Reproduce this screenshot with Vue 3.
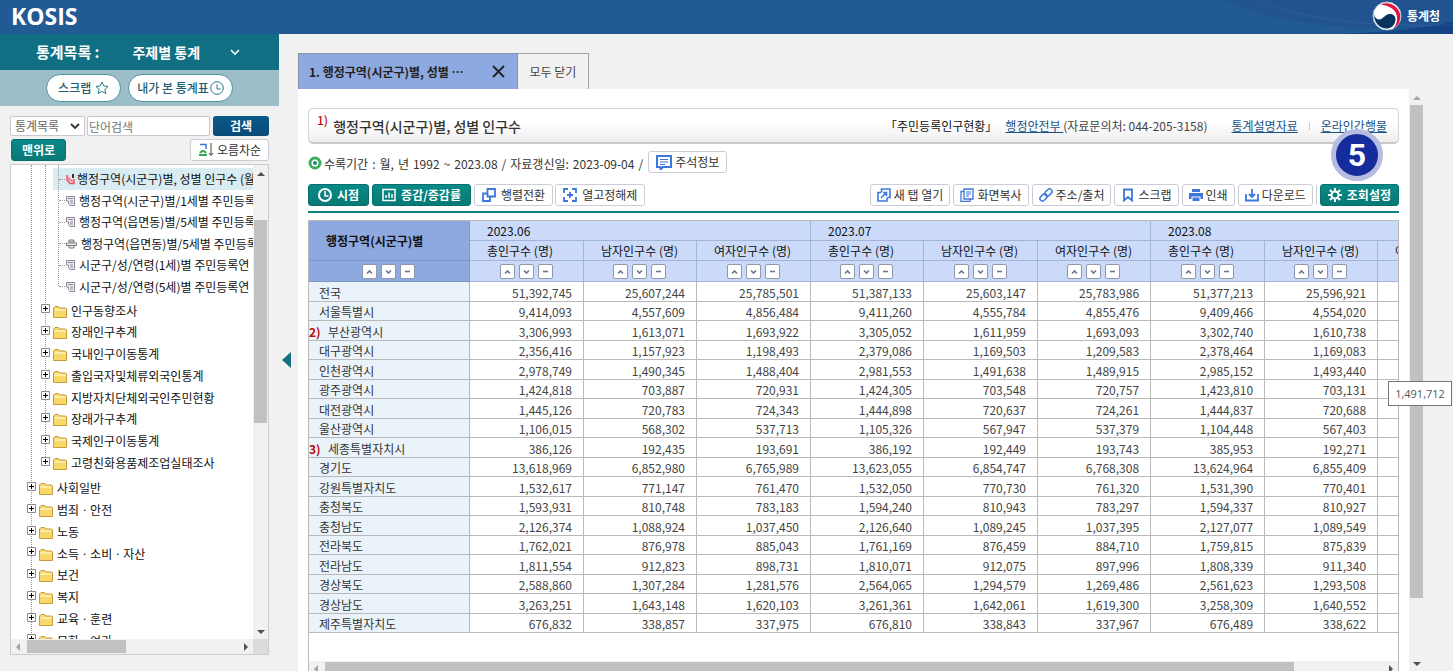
<script setup>
const leaves = [
  { text: '행정구역(시군구)별, 성별 인구수 (월', icon: 'on' },
  { text: '행정구역(시군구)별/1세별 주민등록', icon: 'doc' },
  { text: '행정구역(읍면동)별/5세별 주민등록', icon: 'doc' },
  { text: '행정구역(읍면동)별/5세별 주민등록', icon: 'print' },
  { text: '시군구/성/연령(1세)별 주민등록연', icon: 'doc' },
  { text: '시군구/성/연령(5세)별 주민등록연', icon: 'doc' },
]
const inner = ['인구동향조사', '장래인구추계', '국내인구이동통계', '출입국자및체류외국인통계', '지방자치단체외국인주민현황', '장래가구추계', '국제인구이동통계', '고령친화용품제조업실태조사']
const outer = ['사회일반', '범죄ㆍ안전', '노동', '소득ㆍ소비ㆍ자산', '보건', '복지', '교육ㆍ훈련', '문화ㆍ여가']

const period = ['수록기간', ':', '월,', '년', '1992', '~', '2023.08', '/', '자료갱신일:', '2023-09-04', '/']
const months = ['2023.06', '2023.07', '2023.08']
const measures = ['총인구수 (명)', '남자인구수 (명)', '여자인구수 (명)']
const rows = [
  ['전국', '51,392,745', '25,607,244', '25,785,501', '51,387,133', '25,603,147', '25,783,986', '51,377,213', '25,596,921'],
  ['서울특별시', '9,414,093', '4,557,609', '4,856,484', '9,411,260', '4,555,784', '4,855,476', '9,409,466', '4,554,020'],
  ['부산광역시', '3,306,993', '1,613,071', '1,693,922', '3,305,052', '1,611,959', '1,693,093', '3,302,740', '1,610,738'],
  ['대구광역시', '2,356,416', '1,157,923', '1,198,493', '2,379,086', '1,169,503', '1,209,583', '2,378,464', '1,169,083'],
  ['인천광역시', '2,978,749', '1,490,345', '1,488,404', '2,981,553', '1,491,638', '1,489,915', '2,985,152', '1,493,440'],
  ['광주광역시', '1,424,818', '703,887', '720,931', '1,424,305', '703,548', '720,757', '1,423,810', '703,131'],
  ['대전광역시', '1,445,126', '720,783', '724,343', '1,444,898', '720,637', '724,261', '1,444,837', '720,688'],
  ['울산광역시', '1,106,015', '568,302', '537,713', '1,105,326', '567,947', '537,379', '1,104,448', '567,403'],
  ['세종특별자치시', '386,126', '192,435', '193,691', '386,192', '192,449', '193,743', '385,953', '192,271'],
  ['경기도', '13,618,969', '6,852,980', '6,765,989', '13,623,055', '6,854,747', '6,768,308', '13,624,964', '6,855,409'],
  ['강원특별자치도', '1,532,617', '771,147', '761,470', '1,532,050', '770,730', '761,320', '1,531,390', '770,401'],
  ['충청북도', '1,593,931', '810,748', '783,183', '1,594,240', '810,943', '783,297', '1,594,337', '810,927'],
  ['충청남도', '2,126,374', '1,088,924', '1,037,450', '2,126,640', '1,089,245', '1,037,395', '2,127,077', '1,089,549'],
  ['전라북도', '1,762,021', '876,978', '885,043', '1,761,169', '876,459', '884,710', '1,759,815', '875,839'],
  ['전라남도', '1,811,554', '912,823', '898,731', '1,810,071', '912,075', '897,996', '1,808,339', '911,340'],
  ['경상북도', '2,588,860', '1,307,284', '1,281,576', '2,564,065', '1,294,579', '1,269,486', '2,561,623', '1,293,508'],
  ['경상남도', '3,263,251', '1,643,148', '1,620,103', '3,261,361', '1,642,061', '1,619,300', '3,258,309', '1,640,552'],
  ['제주특별자치도', '676,832', '338,857', '337,975', '676,810', '338,843', '337,967', '676,489', '338,622'],
]
const notes = { '부산광역시': '2)', '세종특별자치시': '3)' }
const sorts = [
  { name: '오름차순 정렬', d: 'M4 8.5 L6.500 6 L9 8.5' },
  { name: '내림차순 정렬', d: 'M4 5.5 L6.500 8 L9 5.5' },
  { name: '정렬 해제', d: 'M4 6.5 H9' },
]
</script>

<template>
  <div class="page">
    <header class="top">
      <svg class="swoosh" viewBox="0 0 260 34" aria-hidden="true">
        <path d="M30 0 C90 26 170 32 260 27 V0 Z" fill="#1f4f8c" opacity=".55" />
        <path d="M120 34 C190 34 230 28 260 22 V34 Z" fill="#123f80" opacity=".8" />
        <path d="M60 0 C110 20 180 27 260 25" fill="none" stroke="#3467a5" opacity=".5" />
      </svg>
      <a class="brand" href="#">KOSIS</a>
      <a class="agency" href="#">
        <svg width="30" height="30" viewBox="0 0 30 30" aria-hidden="true">
          <circle cx="15" cy="15" r="14" fill="#fff" stroke="#b4c2d6" />
          <path d="M9 3.500 C17 0 26 5 28 13 C29 20 26 25 22 27 C26 21 26 15 23 10.500 C20 6.500 15 4.500 9 3.500Z" fill="#e4123f" />
          <path d="M2 12 C2 17 6 20 10 17.500 C13 15.500 14 13 18 13 C21 13 23.500 15 23.500 18 C23.500 24 19 28 14 27.500 C7 27 1.500 21 2 12Z" fill="#06345f" />
        </svg>
        <span>통계청</span>
      </a>
    </header>

    <div class="body">
      <aside class="side">
        <div class="catalog">
          <label for="catalog">통계목록 :</label>
          <select id="catalog" class="catalog-select"><option>주제별 통계</option></select>
          <svg class="chev" width="10" height="7" viewBox="0 0 10 7" aria-hidden="true"><path d="M1 1 L5 5 L9 1" fill="none" stroke="#fff" stroke-width="1.600" /></svg>
        </div>
        <div class="pills">
          <button class="pill">스크랩
            <svg width="14" height="14" viewBox="0 0 14 14"><path d="M7 1 L8.800 5 L13 5.400 L9.900 8.300 L10.800 12.600 L7 10.400 L3.200 12.600 L4.100 8.300 L1 5.400 L5.200 5Z" fill="none" stroke="#27798b" stroke-linejoin="round" /></svg>
          </button>
          <button class="pill viewed">내가 본 통계표
            <svg width="14" height="14" viewBox="0 0 14 14"><circle cx="7" cy="7" r="6.300" fill="none" stroke="#27798b" /><path d="M7 3.500 V8 H10.500" fill="none" stroke="#27798b" /></svg>
          </button>
        </div>

        <div class="search">
          <div class="selwrap">
            <select class="box" aria-label="검색 구분"><option>통계목록</option></select>
            <svg class="sel-chev" width="10" height="7" viewBox="0 0 10 7" aria-hidden="true"><path d="M1 1 L5 5 L9 1" fill="none" stroke="#333" stroke-width="1.800" /></svg>
          </div>
          <input class="box word" type="text" placeholder="단어검색" aria-label="단어검색">
          <button class="find">검색</button>
        </div>
        <div class="search second">
          <button class="teal totop">맨위로</button>
          <button class="plain order">
            <svg width="16" height="14" viewBox="0 0 16 14"><path d="M2 1.500 H8 V6" fill="none" stroke="#3b78d8" stroke-width="1.500" /><path d="M2 10 Q5 6 8 10 M1 12 H9" fill="none" stroke="#35a853" stroke-width="2" /><path d="M13 0 V12 M11 10 L13 12.500 L15 10" fill="none" stroke="#444" /></svg>
            오름차순
          </button>
        </div>

        <div class="treebox">
          <div class="treeview">
            <ul class="tree">
              <li class="branch">
                <ul class="leaves">
                  <li v-for="(leaf, i) in leaves" :key="i" :class="['leaf', { on: leaf.icon === 'on' }]">
                    <svg v-if="leaf.icon === 'on'" width="9" height="11" viewBox="0 0 9 11"><path d="M1 1 V6 L4 9.500 H8 V5" fill="#fbd9dd" stroke="#e8505f" stroke-width="1.500" /><path d="M3 3 V6 H6 V8" fill="none" stroke="#e8505f" /><path d="M7 0 V4" stroke="#333" stroke-width="2" /></svg>
                    <svg v-else-if="leaf.icon === 'doc'" width="9" height="10" viewBox="0 0 9 10"><path d="M.5 .5 H8.500 V9.500 H4 L2.500 7.500 V5 H.5Z" fill="#f1edf5" stroke="#8d8494" /><path d="M2 2.500 H7 M4 5 H7 M4 7 H7" stroke="#8d8494" /></svg>
                    <svg v-else width="11" height="10" viewBox="0 0 11 10"><path d="M3 1 H8 V3 H3Z M.5 4 H10.500 V6.500 H.5Z M3 6.500 H8 V9 H3Z" fill="#eee" stroke="#777" /></svg>
                    <a href="#">{{ leaf.text }}</a>
                  </li>
                </ul>
                <ul class="folders">
                  <li v-for="name in inner" :key="name" class="folder">
                    <svg class="plus" width="9" height="9" viewBox="0 0 9 9"><path d="M.5 .5 H8.500 V8.500 H.5Z" fill="#fff" stroke="#8a8a8a" /><path d="M2 4.500 H7 M4.500 2 V7" stroke="#000" /></svg>
                    <svg class="dir" width="14" height="12" viewBox="0 0 14 12"><path d="M.5 2 L2 .5 H5.500 L7 2 H12.500 L13.500 3 V11.500 H.5Z" fill="#f8d869" stroke="#c79a3c" /><path d="M1.500 4 H12.500" stroke="#fff4c2" stroke-width="1.500" /></svg>
                    <a href="#">{{ name }}</a>
                  </li>
                </ul>
              </li>
              <li v-for="name in outer" :key="name" class="folder">
                <svg class="plus" width="9" height="9" viewBox="0 0 9 9"><path d="M.5 .5 H8.500 V8.500 H.5Z" fill="#fff" stroke="#8a8a8a" /><path d="M2 4.500 H7 M4.500 2 V7" stroke="#000" /></svg>
                <svg class="dir" width="14" height="12" viewBox="0 0 14 12"><path d="M.5 2 L2 .5 H5.500 L7 2 H12.500 L13.500 3 V11.500 H.5Z" fill="#f8d869" stroke="#c79a3c" /><path d="M1.500 4 H12.500" stroke="#fff4c2" stroke-width="1.500" /></svg>
                <a href="#">{{ name }}</a>
              </li>
            </ul>
          </div>
          <div class="vbar tree-v">
            <svg width="14" height="14" viewBox="0 0 14 14"><path d="M3 9 L7 5 L11 9Z" fill="#505050" /></svg>
            <i class="thumb"></i>
            <svg width="14" height="14" viewBox="0 0 14 14"><path d="M3 5 L7 9 L11 5Z" fill="#505050" /></svg>
          </div>
          <div class="hbar tree-h">
            <svg width="14" height="14" viewBox="0 0 14 14"><path d="M9 3 L5 7 L9 11Z" fill="#a3a3a3" /></svg>
            <i class="thumb"></i>
            <svg width="14" height="14" viewBox="0 0 14 14"><path d="M5 3 L9 7 L5 11Z" fill="#505050" /></svg>
          </div>
          <div class="corner"></div>
        </div>
      </aside>

      <button class="fold" aria-label="목록 접기"><svg width="9" height="16" viewBox="0 0 9 16"><path d="M9 0 V16 L0 8Z" fill="#116f83" /></svg></button>

      <main class="main">
        <nav class="tabs">
          <div class="tab active">
            <a href="#">1. 행정구역(시군구)별, 성별 ⋯</a>
            <button class="close" aria-label="닫기"><svg width="13" height="13" viewBox="0 0 13 13"><path d="M1 1 L12 12 M12 1 L1 12" stroke="#222" stroke-width="1.800" /></svg></button>
          </div>
          <button class="tab all">모두 닫기</button>
        </nav>

        <div class="panelrow">
          <section class="panel">
            <div class="titlebar">
              <h1><sup>1)</sup>행정구역(시군구)별, 성별 인구수</h1>
              <p class="source">
                <span class="dark">「주민등록인구현황」</span>
                <a href="#">행정안전부 </a><span>(자료문의처: 044-205-3158)</span>
                <a href="#" class="doc">통계설명자료</a><i class="bar"></i><a href="#">온라인간행물</a>
              </p>
            </div>

            <div class="info">
              <svg width="14" height="14" viewBox="0 0 14 14"><circle cx="7" cy="7" r="5" fill="#fff" stroke="#3fae62" stroke-width="3" /><circle cx="7" cy="7" r="2" fill="#1d8a78" /></svg>
              <p class="period"><span v-for="(w, i) in period" :key="i">{{ w }}</span></p>
              <button class="plain note">
                <svg width="16" height="15" viewBox="0 0 16 15"><path d="M1 1 H15 V12 H7 L4.500 14.500 V12 H1Z" fill="none" stroke="#3e77dc" stroke-width="2" /><path d="M4 4.500 H12 M4 7 H12 M4 9.500 H9" stroke="#3e77dc" /></svg>
                주석정보
              </button>
            </div>

            <div class="tools">
              <button class="teal big"><svg width="14" height="14" viewBox="0 0 14 14"><circle cx="7" cy="7" r="6" fill="none" stroke="#fff" stroke-width="2" /><path d="M7 3 V8 H10.500" fill="none" stroke="#fff" stroke-width="1.500" /></svg>시점</button>
              <button class="teal big"><svg width="14" height="14" viewBox="0 0 14 14"><path d="M1 1.500 H13 V12.500 H1Z" fill="none" stroke="#fff" stroke-width="1.500" /><path d="M4 10 V7 M7 10 V4.500 M10 10 V6" stroke="#fff" stroke-width="1.500" /></svg>증감/증감률</button>
              <button class="plain mid"><svg width="14" height="14" viewBox="0 0 14 14"><path d="M5.500 1 H13 V8.500 H5.500Z M5 5.500 H1 V13 H8 V9" fill="none" stroke="#3e77dc" stroke-width="1.800" /></svg>행렬전환</button>
              <button class="plain mid"><svg width="14" height="14" viewBox="0 0 14 14"><path d="M1 5 V1 H5 M9 1 H13 V5 M13 9 V13 H9 M5 13 H1 V9 M7 4 V10 M4 7 H10" fill="none" stroke="#3e77dc" stroke-width="1.800" /></svg>열고정해제</button>
              <div class="right">
                <button class="plain"><svg width="14" height="14" viewBox="0 0 14 14"><path d="M4.500 4 V1 H13 V9.500 H10.500 M9 13 H1 V4.500 H4.500 M10 9.500 V13 H8 M4 10 L9 5 M6 4.500 H9.500 V8" fill="none" stroke="#3e77dc" stroke-width="1.600" /></svg>새 탭 열기</button>
                <button class="plain"><svg width="14" height="14" viewBox="0 0 14 14"><path d="M4 1 H13 V11 H4Z M4 3.500 H1 V13.300 H10 V11" fill="none" stroke="#3e77dc" stroke-width="1.300" /><path d="M6 4 H11 M6 6 H11 M6 8 H9" stroke="#3e77dc" /></svg>화면복사</button>
                <button class="plain"><svg width="14" height="14" viewBox="0 0 14 14"><g transform="rotate(-45 7 7)" fill="none" stroke="#3e77dc" stroke-width="1.500"><rect x="-.5" y="4.500" width="8" height="5" rx="2.500" /><rect x="6.500" y="4.500" width="8" height="5" rx="2.500" /></g></svg>주소/출처</button>
                <button class="plain"><svg width="14" height="14" viewBox="0 0 14 14"><path d="M3 1.500 H11 V12.500 L7 9 L3 12.500Z" fill="none" stroke="#3e77dc" stroke-width="1.800" /></svg>스크랩</button>
                <button class="plain"><svg width="14" height="14" viewBox="0 0 14 14"><path d="M3 1 H11 V4 H3Z M0 5 H14 V11 H11.500 V8.500 H2.500 V11 H0Z M3.500 9.500 H10.500 V13 H3.500Z" fill="#3e77dc" /></svg>인쇄</button>
                <button class="plain"><svg width="14" height="14" viewBox="0 0 14 14"><path d="M1 6 V12.500 H13 V6 M7 1 V8.500 M4 6 L7 9 L10 6" fill="none" stroke="#3e77dc" stroke-width="1.800" /></svg>다운로드</button>
                <i class="bar"></i>
                <button class="teal setup"><svg width="14" height="14" viewBox="0 0 14 14"><circle cx="7" cy="7" r="3.500" fill="none" stroke="#fff" stroke-width="2" /><path d="M7 0 V3 M7 11 V14 M0 7 H3 M11 7 H14 M2 2 L4 4 M10 10 L12 12 M12 2 L10 4 M4 10 L2 12" stroke="#fff" stroke-width="2" /></svg>조회설정</button>
                <span class="step">5</span>
              </div>
            </div>

            <div class="grid">
              <div class="gridview">
                <table>
                  <colgroup><col class="c0"><col v-for="n in 9" :key="n" :class="n % 2 ? 'odd' : 'even'"></colgroup>
                  <thead>
                    <tr>
                      <th rowspan="2" class="key">행정구역(시군구)별</th>
                      <th v-for="m in months" :key="m" colspan="3">{{ m }}</th>
                    </tr>
                    <tr>
                      <template v-for="m in months" :key="m"><th v-for="k in measures" :key="k">{{ k }}</th></template>
                    </tr>
                    <tr class="sortrow">
                      <th v-for="n in 10" :key="n" :class="{ key: n === 1 }">
                        <div class="sorts">
                          <button v-for="s in sorts" :key="s.name" :aria-label="s.name"><svg width="13" height="13" viewBox="0 0 13 13"><path :d="s.d" fill="none" stroke="#6d7787" stroke-width="1.600" /></svg></button>
                        </div>
                      </th>
                    </tr>
                  </thead>
                  <tbody>
                    <tr v-for="r in rows" :key="r[0]">
                      <th scope="row" :class="{ noted: notes[r[0]] }"><b v-if="notes[r[0]]">{{ notes[r[0]] }}</b>{{ r[0] }}</th>
                      <td v-for="i in 8" :key="i">{{ r[i] }}</td>
                      <td></td>
                    </tr>
                  </tbody>
                </table>
              </div>
              <div class="hbar grid-h">
                <svg width="14" height="14" viewBox="0 0 14 14"><path d="M9 3 L5 7 L9 11Z" fill="#a3a3a3" /></svg>
                <i class="thumb"></i>
                <svg width="14" height="14" viewBox="0 0 14 14"><path d="M5 3 L9 7 L5 11Z" fill="#505050" /></svg>
              </div>
              <div class="tip" role="tooltip">1,491,712</div>
            </div>
          </section>
          <div class="vbar main-v">
            <svg width="14" height="14" viewBox="0 0 14 14"><path d="M3 9 L7 5 L11 9Z" fill="#a3a3a3" /></svg>
            <i class="thumb"></i>
            <svg width="14" height="14" viewBox="0 0 14 14"><path d="M3 5 L7 9 L11 5Z" fill="#505050" /></svg>
          </div>
        </div>
      </main>
    </div>
  </div>
</template>

<style>
body { background: #f1f1f1; }
</style>

<style scoped>
* { box-sizing: border-box; margin: 0; padding: 0; }
.page {
  display: flex; flex-direction: column; height: 100vh; overflow: hidden;
  background: #f1f1f1; color: #333;
  font: 12px/18px "Noto Sans CJK KR", "Noto Sans", sans-serif;
}
button, select, input { font: inherit; color: inherit; border: 0; background: none; }
button { display: inline-flex; align-items: center; justify-content: center; white-space: nowrap; cursor: pointer; }
a { color: inherit; text-decoration: none; }
ul { list-style: none; }
svg { flex: none; display: block; }

.top { position: relative; flex: none; display: flex; align-items: center; justify-content: space-between; height: 34px; padding: 0 13px 0 11px; background: #225a94; }
.swoosh { position: absolute; right: 0; top: 0; width: 260px; height: 34px; }
.brand { align-self: flex-start; color: #fff; font: 700 23px/32px "Open Sans", sans-serif; }
.agency { position: relative; display: flex; align-items: center; gap: 5px; height: 32px; align-self: flex-start; color: #fff; font-weight: 700; }

.body { flex: 1; display: flex; min-height: 0; }
.side { flex: none; display: flex; flex-direction: column; width: 279px; padding-bottom: 16px; }
.catalog { position: relative; flex: none; display: flex; align-items: center; height: 36px; padding-left: 36px; background: #116f83; color: #fff; font-weight: 700; font-size: 15px; }
.catalog-select { appearance: none; width: 114px; height: 30px; margin-left: 33px; font-size: 14px; font-weight: 700; outline: 0; }
.chev { margin-left: -16px; pointer-events: none; }
.pills { flex: none; display: flex; justify-content: center; gap: 7px; height: 36px; padding-top: 4px; background: #9bbec8; }
.pill { gap: 4px; height: 28px; padding: 0 11px; border: 1px solid #4d94a4; border-radius: 14px; background: #fff; color: #1f5e6f; font-weight: 500; }
.viewed { gap: 1px; padding: 0 8px; }

.search { flex: none; display: flex; gap: 2px; padding: 10px 10px 0; }
.second { justify-content: space-between; padding-top: 3px; margin-bottom: 3px; }
.selwrap { flex: none; display: flex; align-items: center; width: 75px; }
.sel-chev { margin-left: -15px; pointer-events: none; }
.box { height: 20px; border: 1px solid #c9c9cf; border-radius: 2px; background: #fff; color: #666; }
select.box { appearance: none; width: 75px; padding-left: 4px; }
.word { flex: 1; min-width: 0; padding: 0 1px; }
.word::placeholder { color: #757575; }
.find { width: 56px; height: 20px; margin-left: 1px; border-radius: 3px; background: linear-gradient(#0b5a8c, #084a75); color: #fff; font-weight: 700; }
.teal { gap: 5px; height: 22px; border: 1px solid #067070; border-radius: 3px; background: linear-gradient(#098a88, #077975); color: #fff; font-weight: 700; }
.plain { gap: 3px; height: 22px; padding: 0 6px; border: 1px solid #ccccd6; border-radius: 3px; background: #fff; color: #333; }
.totop { width: 55px; margin-left: 1px; }
.order { width: 79px; }

.treebox { flex: 1; display: grid; grid-template: minmax(0, 1fr) 15px / minmax(0, 1fr) 15px; min-height: 0; margin: 0 10px; border: 1px solid #ccc; background: #fff; }
.treeview { overflow: hidden; min-width: 0; }
.tree { position: relative; padding-left: 16px; color: #111; }
.tree::before, .branch::before, .leaves::before { content: ""; position: absolute; top: 0; bottom: 0; border-left: 1px dotted #999; }
.tree::before { left: 20px; }
.branch { position: relative; padding-left: 14px; padding-bottom: 3px; white-space: nowrap; }
.branch::before { left: 18px; bottom: 14px; }
.leaves { position: relative; padding: 3px 0 3px 12px; }
.leaves::before { left: 17px; bottom: 14px; }
.leaf { display: flex; align-items: center; gap: 4px; height: 22px; padding-left: 6px; }
.leaf:nth-child(even) { height: 21px; }
.leaf::before { content: ""; flex: none; width: 6px; margin-right: -3px; border-top: 1px dotted #999; }
.leaf.on { gap: 2px; background: #d9ecf2; }
.leaf.on::before { margin-right: -1px; }
.folder { display: flex; align-items: center; height: 22px; white-space: nowrap; }
.folder:nth-child(4n + 1) { height: 21px; }
.plus { position: relative; margin-top: -4px; }
.dir { margin: 2px 4px 0 3px; }

.vbar { display: flex; flex-direction: column; align-items: center; background: #f1f1f1; }
.hbar { display: flex; align-items: center; background: #f1f1f1; }
.thumb { background: #c1c1c1; }
.tree-v { padding-top: 2px; }
.tree-v .thumb { width: 13px; flex: 0 0 43%; margin: 39px 0 auto; }
.tree-h .thumb { height: 13px; flex: 0 0 41%; margin: 0 auto 0 2px; }
.corner { background: #dcdcdc; }

.fold { flex: none; width: 19px; padding-right: 4px; margin-top: 14px; }
.main { flex: 1; display: flex; flex-direction: column; min-width: 0; padding: 19px 29px 0 0; }
.tabs { flex: none; display: flex; height: 36px; }
.tab { height: 36px; border: 1px solid #a5a5a5; border-bottom: 0; }
.active { display: flex; align-items: center; justify-content: space-between; width: 220px; padding: 0 12px 0 10px; background: #8da9df; border-color: #8b93a8; color: #222; font-weight: 700; }
.all { width: 71px; border-left: 0; color: #444; }
.panelrow { flex: 1; display: flex; min-height: 0; }
.panel { flex: 1; min-width: 0; padding: 19px 10px 0 10px; background: #fff; }

.titlebar { display: flex; align-items: center; justify-content: space-between; height: 36px; padding: 0 11px 0 8px; border: 1px solid #d5d5d5; border-bottom: 2px solid #c9c9c9; border-radius: 5px; background: linear-gradient(#fff 40%, #eee); white-space: nowrap; }
h1 { display: flex; align-items: center; gap: 5px; font-size: 14px; font-weight: 500; color: #333; }
sup { align-self: flex-start; color: #b80d0d; font-size: 12px; line-height: 6px; font-weight: 500; }
.source { display: flex; align-items: center; color: #444; }
.source a { color: #1a5284; text-decoration: underline; white-space: pre; }
.dark { margin-right: 8px; color: #111; }
.source .doc { margin-left: 24px; }
.bar { width: 1px; height: 8px; margin: 0 11px; background: #ccc; }
.info { display: flex; align-items: center; height: 22px; margin-top: 7px; white-space: nowrap; }
.period { display: flex; gap: 4px; margin: 3px 5px 0 2px; }
.info svg { margin-top: 2px; }
.note { padding: 0 7px; }
.info .note svg { margin-top: 0; }
.tools { display: flex; gap: 2px; margin-top: 11px; padding-bottom: 5px; border-bottom: 2px solid #14827f; }
.big { padding: 0 9px; }
.mid { padding: 0 7px; gap: 5px; }
.tools .teal + .teal { margin: 0 1px; }
.right { position: relative; display: flex; align-items: center; gap: 3px; margin-left: auto; }
.right .bar { height: 20px; margin: 0; }
.setup { padding: 0 7px; }
.step { position: absolute; right: 16px; bottom: 25px; width: 52px; height: 52px; border: 5px solid #b5bce0; border-radius: 50%; background: #142c9c; color: #fff; font: 700 32px/42px Roboto, sans-serif; text-align: center; }

.grid { position: relative; margin-top: 7px; border: 1px solid #b9b9b9; }
.gridview { overflow: hidden; padding-bottom: 28px; }
table { table-layout: fixed; width: 1183px; border-collapse: separate; border-spacing: 0; }
.c0 { width: 161px; }
.odd { width: 114px; }
.even { width: 113px; }
th, td { overflow: hidden; white-space: nowrap; border: solid #b9b9b9; border-width: 0 1px 1px 0; font-weight: 400; }
thead th { height: 20px; padding-left: 17px; border-color: #a3b4d6; background: #cadaf8; color: #111; text-align: left; }
thead .key { background: #8da9df; border-color: #7f97c6; font-weight: 700; }
.sortrow th, .sortrow .key { height: 21px; padding: 0; }
.sorts { display: flex; justify-content: center; gap: 4px; margin-right: 1px; }
.sorts button { width: 15px; height: 15px; border: 1px solid #8f99ab; border-radius: 2px; background: #fff; }
tbody tr { height: 20px; }
tbody tr:nth-child(even) { height: 19px; }
tbody th, tbody td { line-height: 16px; padding-top: 2px; }
tbody th { padding-left: 10px; background: #ebf3fa; text-align: left; }
tbody .noted { padding-left: 0; }
.noted b { display: inline-block; width: 19px; color: #b80d0d; }
td { padding-right: 11px; text-align: right; color: #444; }
.grid-h { height: 15px; }
.grid-h .thumb { height: 13px; flex: 0 0 89%; margin: 0 auto 0 2px; }
.tip { position: absolute; top: 160px; right: -54px; width: 64px; height: 25px; border: 1px solid #767676; background: #fff; color: #555; font: 11px/24px "Open Sans", sans-serif; text-align: center; z-index: 1; }
.main-v { flex: none; width: 15px; padding: 2px 0 0; }
.main-v .thumb { width: 13px; flex: 0 0 85%; margin-bottom: auto; }
</style>
